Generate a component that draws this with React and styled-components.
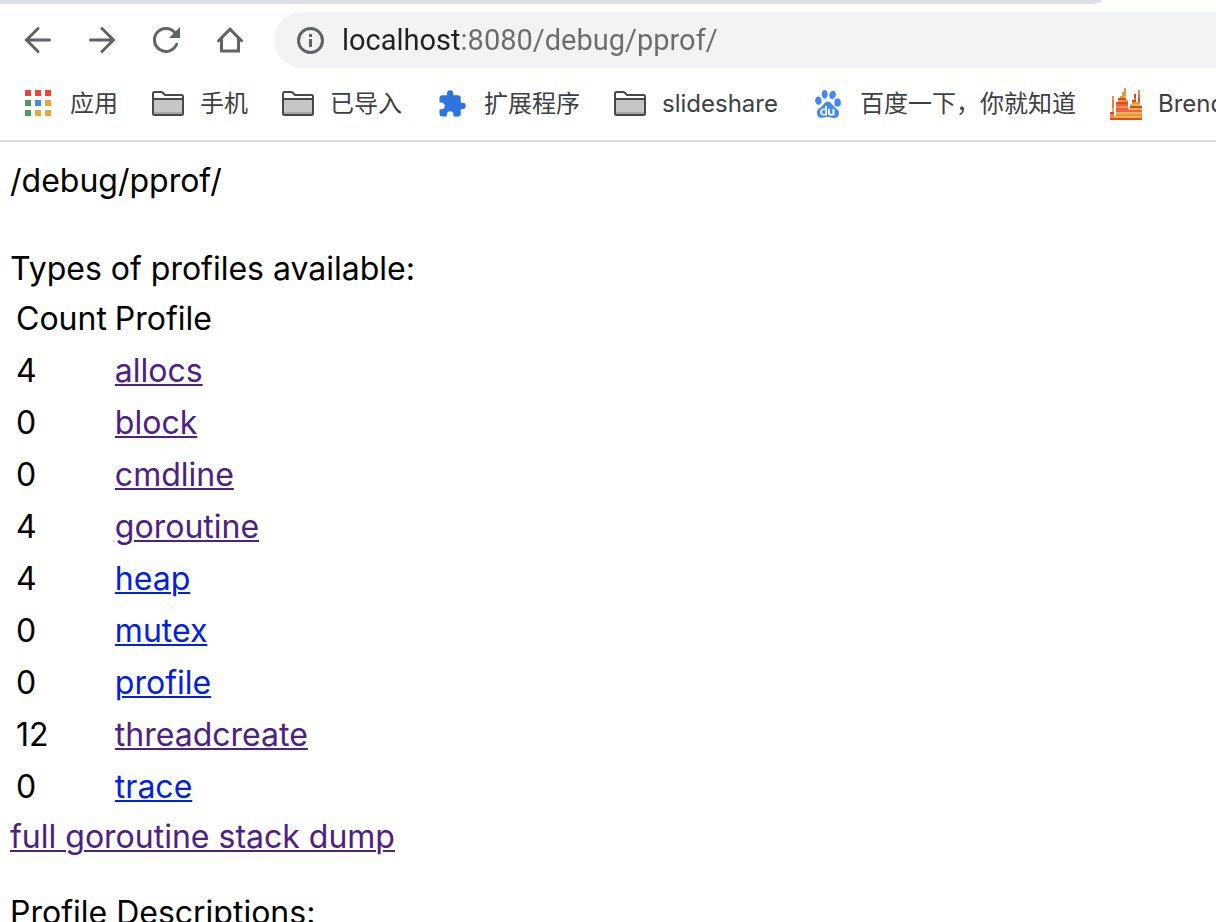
import React from "react";
import { useState } from "react";
import styled, { createGlobalStyle } from "styled-components";
import { MdExtension } from "react-icons/md";
import { SiBaidu } from "react-icons/si";

const GlobalStyle = createGlobalStyle`
    * {
        box-sizing: border-box;
    }

    body {
        margin: 0;
        background-color: white;
        font-family: Inter, "Noto Sans CJK SC", sans-serif;
    }
`

let Window = styled.div`
    height: 100vh;
    display: flex;
    flex-direction: column;
    overflow: hidden;
`

let TabStrip = styled.div`
    flex: none;
    height: 4px;
    margin-right: 114px;
    background-color: #dfe0e6;
    border-bottom-right-radius: 12px 4px;
`

let Toolbar = styled.div`
    flex: none;
    display: flex;
    align-items: center;
    gap: 32px;
    padding: 8px 0 8px 22px;
`

let ToolButton = styled.button`
    flex: none;
    width: 32px;
    height: 32px;
    padding: 0;
    border: 0;
    background: none;
    color: #5f6368;

    svg {
        display: block;
    }
`

let AddressBar = styled.label`
    flex: 1;
    display: flex;
    align-items: center;
    gap: 16px;
    height: 56px;
    margin-left: -4px;
    padding-left: 20px;
    border-radius: 28px 0 0 28px;
    background-color: #f1f3f4;
    color: #5f6368;
`

/* host part is dark, the rest of the address is grey */
let AddressInput = styled.input`
    flex: 1;
    min-width: 0;
    height: 40px;
    padding: 0;
    border: 0;
    outline: 0;
    font-family: Roboto, sans-serif;
    font-size: 29px;
    color: #6a6d70;
    background-image: linear-gradient(to right, #202124 118px, #6a6d70 118px);
    background-clip: text;
    -webkit-background-clip: text;
    -webkit-text-fill-color: transparent;
`

let BookmarkBar = styled.nav`
    flex: none;
    display: flex;
    gap: 34px;
    padding: 12px 0 20px 22px;
    border-bottom: 2px solid #dadae0;
    overflow: hidden;
`

let Bookmark = styled.a`
    flex: none;
    display: flex;
    align-items: center;
    gap: 16px;
    height: 32px;
    font-size: 24px;
    line-height: 32px;
    white-space: nowrap;
    text-decoration: none;
    color: #3c4043;
`

let IconBox = styled.span`
    flex: none;
    display: flex;
    align-items: center;
    justify-content: center;
    width: 32px;
    height: 32px;
    color: ${(props) => props.$color};
`

let Page = styled.main`
    flex: 1;
    min-height: 0;
    overflow: hidden;
    padding: 17px 10px;
    font-size: 32px;
    line-height: 44px;
    color: black;
`

let Text = styled.p`
    margin: 0 0 ${(props) => props.$space || 0}px;
`

let ProfileTable = styled.table`
    border-collapse: separate;
    border-spacing: 4px;
`

let HeadCell = styled.th`
    padding: 2px;
    text-align: left;
    font-weight: normal;
`

let Cell = styled.td`
    padding: 2px;
`

let ProfileLink = styled.a`
    color: ${(props) => (props.$visited ? "#4c2086" : "#0020e8")};
    text-decoration: underline;
    text-decoration-thickness: 2px;
    text-underline-offset: 2px;
`

function BackIcon(){
    return(
        <svg width="32" height="32" fill="none" stroke="currentColor" strokeWidth="3" strokeLinecap="round">
            <path d="M27.5 16H5M16 4.5L4.5 16L16 27.5" />
        </svg>
    )
}

function ForwardIcon(){
    return(
        <svg width="32" height="32" fill="none" stroke="currentColor" strokeWidth="3" strokeLinecap="round">
            <path d="M4.5 16H27M16 4.5L27.5 16L16 27.5" />
        </svg>
    )
}

function ReloadIcon(){
    return(
        <svg width="32" height="32">
            <path d="M26.6 20.3A11.5 11.5 0 1 1 24.5 8.2" fill="none" stroke="currentColor" strokeWidth="3" strokeLinecap="round" />
            <path d="M30 3V14H19Z" fill="currentColor" />
        </svg>
    )
}

function HomeIcon(){
    return(
        <svg width="32" height="32" fill="none" stroke="currentColor" strokeWidth="3" strokeLinecap="round">
            <path d="M4.5 16.8L16 5.2L27.5 16.8" />
            <path d="M7.5 15V27H24.5V15" />
        </svg>
    )
}

function InfoIcon(){
    return(
        <svg width="32" height="32">
            <circle cx="16.5" cy="16.5" r="12" fill="none" stroke="currentColor" strokeWidth="3" />
            <path d="M15 10h3v3h-3zM15 15h3v8h-3z" fill="currentColor" />
        </svg>
    )
}

let appColors = [
    "#e8453c", "#e8453c", "#e8453c",
    "#4f9a5b", "#3b8bf0", "#e9a33a",
    "#4f9a5b", "#e9a33a", "#e9a33a",
]

function AppsIcon(){
    return(
        <svg width="32" height="32">
            {appColors.map((color, i) => (
                <rect key={i} x={3 + (i % 3) * 10} y={2 + Math.floor(i / 3) * 10} width="6" height="6" fill={color} />
            ))}
        </svg>
    )
}

function FolderIcon(){
    return(
        <svg width="32" height="32">
            <path d="M1 11H31V27H1Z" fill="#c6c6c6" />
            <path d="M2 24H30V26H2Z" fill="#a8a8a8" />
            <path d="M1 11V5.5Q1 4 2.5 4H9Q10 4 10.8 4.8L13 7H29.5Q31 7 31 8.5V25.5Q31 27 29.5 27H2.5Q1 27 1 25.5V11H31" fill="none" stroke="#484848" strokeWidth="2" />
        </svg>
    )
}

/* [row, first column, width, colour] on a 16 x 16 grid */
let flames = [
    [0, 7, 1, "#e8953c"],
    [1, 7, 1, "#e8953c"], [1, 14, 1, "#e8953c"],
    [2, 6, 2, "#e8953c"], [2, 14, 1, "#e8953c"],
    [3, 6, 2, "#e8953c"], [3, 12, 1, "#de4a28"], [3, 14, 1, "#ea6a52"],
    [4, 1, 1, "#e8953c"], [4, 5, 2, "#e8953c"], [4, 7, 1, "#e8b648"], [4, 12, 1, "#de4a28"], [4, 14, 1, "#ea6a52"],
    [5, 1, 1, "#e8953c"], [5, 4, 4, "#de4a28"], [5, 12, 1, "#ea6a52"], [5, 14, 1, "#de4a28"],
    [6, 1, 1, "#ea7a45"], [6, 4, 5, "#e8953c"], [6, 11, 2, "#de4a28"], [6, 14, 1, "#de4a28"],
    [7, 1, 1, "#ea7a45"], [7, 3, 6, "#de4a28"], [7, 11, 4, "#e8953c"],
    [8, 1, 1, "#ea7a45"], [8, 3, 6, "#ea6052"], [8, 10, 5, "#e8b648"],
    [9, 1, 1, "#ea7a45"], [9, 3, 6, "#e8953c"], [9, 10, 6, "#de4a28"],
    [10, 1, 1, "#e8b648"], [10, 3, 6, "#ea6052"], [10, 9, 7, "#e8b648"],
    [11, 1, 1, "#e8b648"], [11, 3, 13, "#ea6052"],
    [12, 0, 2, "#de4a28"], [12, 3, 13, "#e8b648"],
    [13, 0, 2, "#ea7a45"], [13, 3, 13, "#e8953c"],
    [14, 0, 2, "#e8953c"], [14, 2, 14, "#e8b648"],
    [15, 0, 16, "#de4a28"],
]

function FlameIcon(){
    return(
        <svg width="32" height="32" viewBox="0 0 16 16" shapeRendering="crispEdges">
            {flames.map(([row, column, width, color], i) => (
                <rect key={i} x={column} y={row} width={width} height="1" fill={color} />
            ))}
        </svg>
    )
}

let bookmarks = [
    { name: "应用", icon: <AppsIcon /> },
    { name: "手机", icon: <FolderIcon /> },
    { name: "已导入", icon: <FolderIcon /> },
    { name: "扩展程序", icon: <MdExtension size={30} />, color: "#2c74e0" },
    { name: "slideshare", icon: <FolderIcon /> },
    { name: "百度一下，你就知道", icon: <SiBaidu size={28} />, color: "#4188f2" },
    { name: "Brendan", icon: <FlameIcon /> },
]

let profiles = [
    { count: 4, name: "allocs", visited: true },
    { count: 0, name: "block", visited: true },
    { count: 0, name: "cmdline", visited: true },
    { count: 4, name: "goroutine", visited: true },
    { count: 4, name: "heap" },
    { count: 0, name: "mutex" },
    { count: 0, name: "profile" },
    { count: 12, name: "threadcreate", visited: true },
    { count: 0, name: "trace" },
]

function App(){

    let [address, setAddress] = useState("localhost:8080/debug/pprof/");

    return(
        <Window lang="zh-CN">
            <GlobalStyle />

            <TabStrip />

            <Toolbar>
                <ToolButton aria-label="Back"><BackIcon /></ToolButton>
                <ToolButton aria-label="Forward"><ForwardIcon /></ToolButton>
                <ToolButton aria-label="Reload"><ReloadIcon /></ToolButton>
                <ToolButton aria-label="Home"><HomeIcon /></ToolButton>
                <AddressBar>
                    <InfoIcon />
                    <AddressInput aria-label="Address" spellCheck={false} value={address} onChange={(e)=>{
                        setAddress(e.target.value)
                    }} />
                </AddressBar>
            </Toolbar>

            <BookmarkBar>
                {bookmarks.map((item) => (
                    <Bookmark key={item.name} href="#">
                        <IconBox $color={item.color}>{item.icon}</IconBox>
                        {item.name}
                    </Bookmark>
                ))}
            </BookmarkBar>

            <Page>
                <Text $space={44}>/debug/pprof/</Text>
                <Text>Types of profiles available:</Text>

                <ProfileTable>
                    <thead>
                        <tr>
                            <HeadCell>Count</HeadCell>
                            <HeadCell>Profile</HeadCell>
                        </tr>
                    </thead>
                    <tbody>
                        {profiles.map((profile) => (
                            <tr key={profile.name}>
                                <Cell>{profile.count}</Cell>
                                <Cell>
                                    <ProfileLink href={"#" + profile.name} $visited={profile.visited}>{profile.name}</ProfileLink>
                                </Cell>
                            </tr>
                        ))}
                    </tbody>
                </ProfileTable>

                <Text $space={32}>
                    <ProfileLink href="#full" $visited>full goroutine stack dump</ProfileLink>
                </Text>
                <Text>Profile Descriptions:</Text>
            </Page>
        </Window>
    )
}

export default App;
